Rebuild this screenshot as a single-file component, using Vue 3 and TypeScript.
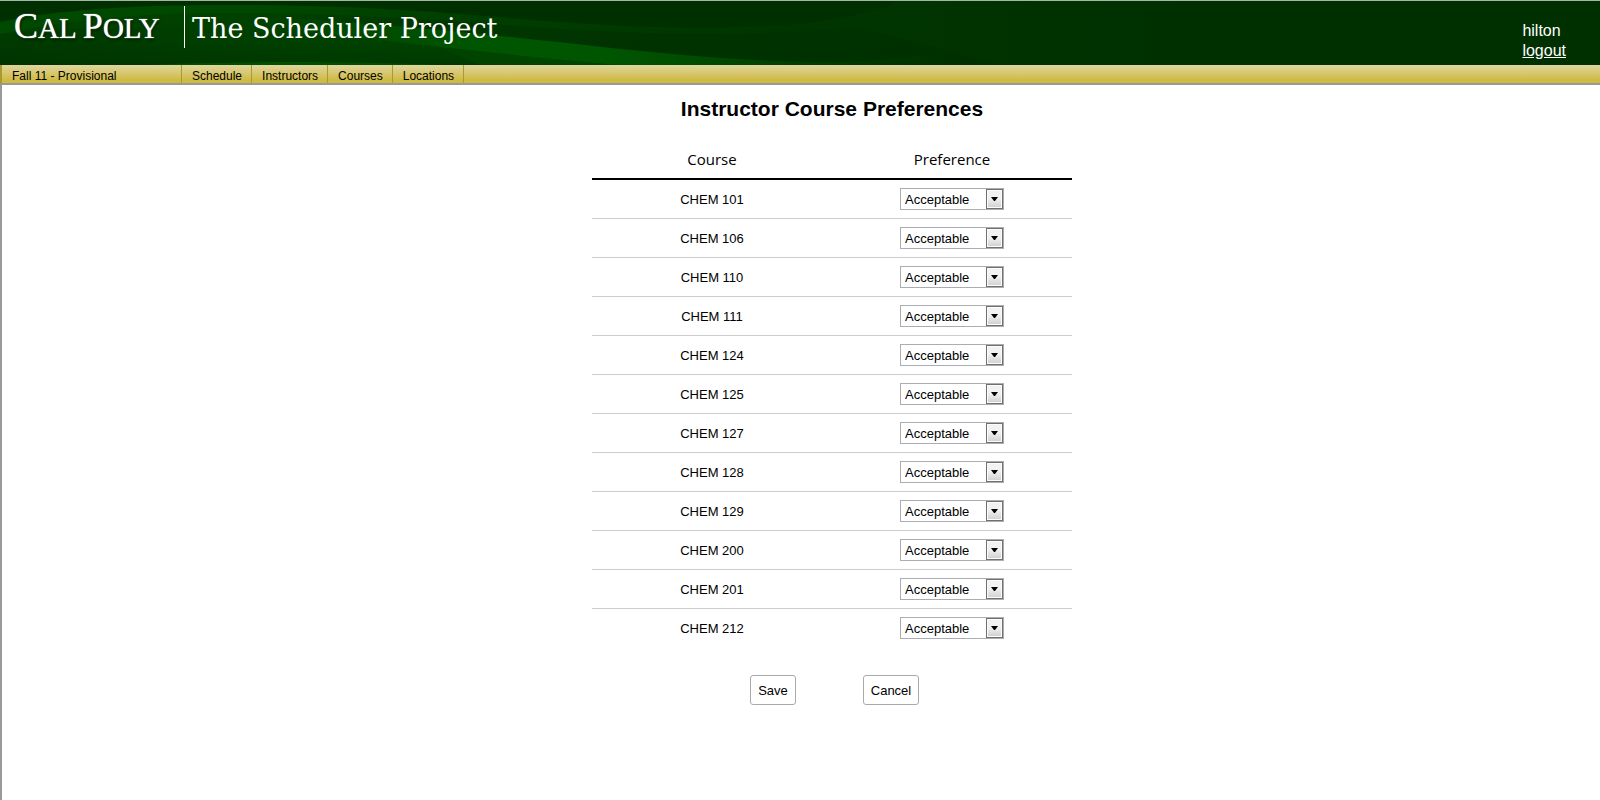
<script setup lang="ts">
import { ref } from 'vue'

interface CoursePreference {
  course: string
  preference: string
}

const navItems = ['Schedule', 'Instructors', 'Courses', 'Locations']
const options = ['Preferred', 'Acceptable', 'Not Qualified']
const codes = [101, 106, 110, 111, 124, 125, 127, 128, 129, 200, 201, 212]

const defaults = (): CoursePreference[] =>
  codes.map((code) => ({ course: `CHEM ${code}`, preference: 'Acceptable' }))

const rows = ref<CoursePreference[]>(defaults())
const saved = ref<CoursePreference[]>(defaults())

const copy = (list: CoursePreference[]) => list.map((row) => ({ ...row }))
const save = () => {
  saved.value = copy(rows.value)
}
const cancel = () => {
  rows.value = copy(saved.value)
}
</script>

<template>
  <div class="page">
    <header class="banner">
      <svg class="swoosh" width="1200" height="64" viewBox="0 0 1200 64" aria-hidden="true">
        <defs>
          <linearGradient id="band" x1="0" x2="1" y1="0" y2="0">
            <stop offset="0" stop-color="#004a00" />
            <stop offset="0.2" stop-color="#004800" />
            <stop offset="0.4" stop-color="#003e00" />
            <stop offset="0.6" stop-color="#003600" />
            <stop offset="1" stop-color="#003000" />
          </linearGradient>
          <linearGradient id="inner" x1="0" x2="1" y1="0" y2="0">
            <stop offset="0" stop-color="#004000" />
            <stop offset="0.25" stop-color="#004100" />
            <stop offset="0.45" stop-color="#003700" />
            <stop offset="0.65" stop-color="#003200" />
            <stop offset="1" stop-color="#003000" />
          </linearGradient>
          <linearGradient id="bright" gradientUnits="userSpaceOnUse" x1="270" x2="950" y1="0" y2="0">
            <stop offset="0" stop-color="#004100" />
            <stop offset="0.3" stop-color="#005500" />
            <stop offset="0.5" stop-color="#005500" />
            <stop offset="0.75" stop-color="#004200" />
            <stop offset="1" stop-color="#003000" />
          </linearGradient>
          <linearGradient id="lower" gradientUnits="userSpaceOnUse" x1="0" x2="620" y1="0" y2="0">
            <stop offset="0" stop-color="#003a00" />
            <stop offset="0.5" stop-color="#004100" />
            <stop offset="1" stop-color="#004600" />
          </linearGradient>
          <linearGradient id="shade" x1="0" x2="0" y1="0" y2="1">
            <stop offset="0.4" stop-color="#002800" stop-opacity="0" />
            <stop offset="1" stop-color="#002800" stop-opacity="0.35" />
          </linearGradient>
        </defs>
        <path d="M0 21C60 8 140 4 230 4C340 4 430 10 520 18C640 28 720 29 800 23C840 18 880 10 900 0L1200 0V64H0Z" fill="url(#band)" />
        <path d="M0 33C70 18 150 11 240 12C340 12 430 18 520 25C640 34 760 36 860 26L1000 64H0Z" fill="url(#inner)" />
        <path d="M250 15C350 20 430 28 500 35C610 46 700 60 830 61C870 61 910 57 950 50V64H250Z" fill="url(#bright)" />
        <path d="M0 33C150 18 300 30 380 39C430 45 540 57 620 64H0Z" fill="url(#lower)" />
        <path d="M0 20H380L480 64H0Z" fill="url(#shade)" />
        <path d="M150 64C230 60 350 60 440 64Z" fill="#005000" />
      </svg>
      <div class="brand">
        <span class="logo"><b>C</b>AL <b>P</b>OLY</span>
        <span class="title">The Scheduler Project</span>
      </div>
      <div class="account">
        <span>hilton</span>
        <a href="#logout">logout</a>
      </div>
    </header>

    <nav class="menu">
      <a class="term" href="#term">Fall 11 - Provisional</a>
      <a v-for="item in navItems" :key="item" :href="`#${item.toLowerCase()}`">{{ item }}</a>
    </nav>

    <main class="content">
      <h1>Instructor Course Preferences</h1>
      <form class="form" @submit.prevent="save">
        <table>
          <thead>
            <tr>
              <th scope="col">Course</th>
              <th scope="col">Preference</th>
            </tr>
          </thead>
          <tbody>
            <tr v-for="(row, index) in rows" :key="row.course">
              <td><label :for="`preference-${index}`">{{ row.course }}</label></td>
              <td>
                <span class="picker">
                  <select :id="`preference-${index}`" v-model="row.preference">
                    <option v-for="option in options" :key="option">{{ option }}</option>
                  </select>
                  <span class="arrow" aria-hidden="true">
                    <svg width="7" height="4" viewBox="0 0 7 4"><path d="M0 0H7L4 4H3Z" /></svg>
                  </span>
                </span>
              </td>
            </tr>
          </tbody>
        </table>
        <div class="actions">
          <button type="submit">Save</button>
          <button type="button" @click="cancel">Cancel</button>
        </div>
      </form>
    </main>
  </div>
</template>

<style>
body {
  margin: 0;
  background: #fff;
}
</style>

<style scoped>
.page {
  display: flex;
  flex-direction: column;
  min-height: 100vh;
  box-sizing: border-box;
  border-top: 1px solid #a5b5a9;
  color: #000;
  font: 13px/16px "Liberation Sans", Arial, sans-serif;
}

.banner {
  position: relative;
  display: flex;
  justify-content: space-between;
  height: 64px;
  overflow: hidden;
  background: #003000;
  color: #fff;
}

.swoosh {
  position: absolute;
  top: 0;
  left: 0;
}

.brand {
  position: relative;
  display: flex;
  align-items: flex-start;
  padding: 5px 0 0 14px;
}

.logo {
  width: 170px;
  font: 29px/40px "Liberation Serif", "Times New Roman", serif;
  text-shadow: 0 0 1px #fff, 1px 2px 3px #001c00;
}

.logo b {
  font-size: 36px;
  font-weight: 400;
}

.title {
  height: 42px;
  padding-left: 7px;
  border-left: 1px solid #fff;
  font: 27px/46px "DejaVu Serif", serif;
}

.account {
  position: relative;
  display: flex;
  flex-direction: column;
  padding: 20px 34px 0 0;
  font-size: 16px;
  line-height: 20px;
}

.account a {
  color: #fff;
}

.menu {
  display: flex;
  height: 18px;
  border-left: 2px solid #a89a30;
  border-bottom: 2px solid #999;
  background: linear-gradient(#dfd69f, #cfba42 85%);
  font-size: 12px;
  line-height: 22px;
}

.menu a {
  padding: 0 9px 0 10px;
  border-right: 1px solid #a89a30;
  color: #000;
  text-decoration: none;
}

.menu .term {
  width: 160px;
}

.content {
  display: flex;
  flex: 1;
  flex-direction: column;
  align-items: center;
  padding-left: 62px;
  border-left: 2px solid #999;
}

h1 {
  margin: 12px 0 0;
  font-size: 21px;
  line-height: 24px;
}

.form {
  display: flex;
  flex-direction: column;
  align-items: center;
}

table {
  width: 480px;
  margin-top: 19px;
  table-layout: fixed;
  border-collapse: separate;
  border-spacing: 0;
  text-align: center;
}

th {
  height: 38px;
  padding: 0;
  border-bottom: 2px solid #000;
  font: 15px/20px "Open Sans", "Noto Sans", sans-serif;
}

td {
  height: 38px;
  padding: 0;
  border-bottom: 1px solid #ccc;
}

tbody tr:last-child td {
  border-bottom: 0;
}

label {
  display: block;
  padding-top: 2px;
}

.picker {
  display: inline-grid;
  width: 104px;
  height: 22px;
  vertical-align: middle;
}

select {
  grid-area: 1 / 1;
  box-sizing: border-box;
  padding: 2px 20px 0 4px;
  border: 1px solid #abadb3;
  border-radius: 0;
  background: #fff;
  color: #000;
  font: inherit;
  appearance: none;
}

.arrow {
  display: flex;
  grid-area: 1 / 1;
  align-items: center;
  justify-content: center;
  justify-self: end;
  box-sizing: border-box;
  width: 17px;
  margin: 1px 1px 1px 0;
  border: 1px solid #707070;
  background: linear-gradient(#f2f2f2 45%, #cfcfcf);
  box-shadow: inset 0 0 0 1px #fcfcfc;
  pointer-events: none;
}

.actions {
  display: grid;
  grid-template-columns: 118px 118px;
  justify-items: center;
  margin-top: 28px;
}

button {
  height: 30px;
  padding: 2px 7px 0;
  border: 1px solid #aaa;
  border-radius: 3px;
  background: #fff;
  color: #000;
  font: inherit;
}
</style>
